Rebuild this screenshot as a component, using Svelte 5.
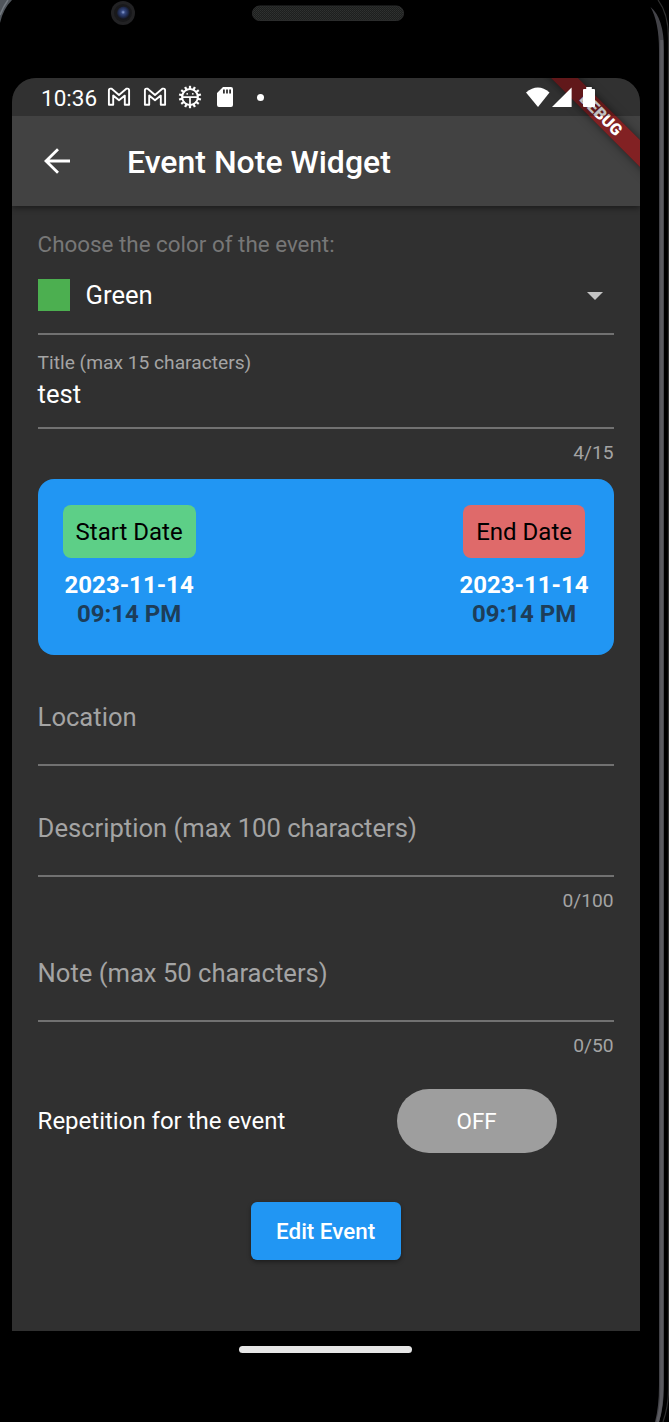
<script>
  const dates = [
    { kind: 'start', label: 'Start Date', day: '2023-11-14', time: '09:14 PM' },
    { kind: 'end', label: 'End Date', day: '2023-11-14', time: '09:14 PM' }
  ];
  const teeth = Array.from({ length: 14 }, (_, i) => (i * 360) / 14);
</script>

{#snippet mail()}
  <svg class="mail" width="24" height="20" viewBox="0 0 24 20">
    <path d="M1.9 17.8V3.2Q1.9 1.6 3.4 1.6H4.4L12 7.9 19.6 1.6H20.6Q22.1 1.6 22.1 3.2V17.8H17.8V8.6L12 13.3 6.2 8.6V17.8Z" fill="none" stroke="#fff" stroke-width="1.9" stroke-linejoin="round" />
  </svg>
{/snippet}

<div class="device">
  <svg class="frame" width="669" height="1422" viewBox="0 0 669 1422">
    <defs>
      <radialGradient id="lens" cx="45%" cy="42%">
        <stop offset="0" stop-color="#8fa3d8" />
        <stop offset=".3" stop-color="#34477f" />
        <stop offset=".75" stop-color="#1d2748" />
        <stop offset="1" stop-color="#15161c" />
      </radialGradient>
      <pattern id="mesh" width="2" height="2" patternUnits="userSpaceOnUse">
        <rect width="2" height="2" fill="#1d1f1e" />
        <rect width="1" height="1" fill="#303231" />
        <rect x="1" y="1" width="1" height="1" fill="#2b2d2c" />
      </pattern>
    </defs>
    <path d="M0 0H12Q3 9 0 23Z" fill="#50555b" />
    <path d="M8 0Q3 7 0 15" fill="none" stroke="#747a80" stroke-width="1.5" />
    <path d="M650.5 7Q664 18 664 50V1385Q664 1407 659 1422H655Q659 1407 659 1385V50Q659 22 650.5 7Z" fill="#434348" />
    <path d="M661.7 40V1390Q661.5 1408 657.5 1422" fill="none" stroke="#5b5b60" stroke-width="3" />
    <path d="M658 0Q668.5 14 668.5 38V1390Q668.5 1406 663 1422" fill="none" stroke="#303030" stroke-width="1.2" />
    <circle cx="123" cy="13" r="12" fill="#222224" />
    <circle cx="123" cy="13" r="9" fill="#19191b" />
    <circle cx="123.8" cy="13.3" r="6.8" fill="url(#lens)" />
    <rect x="252.5" y="6" width="151" height="14.5" rx="7" fill="url(#mesh)" stroke="#2b2c2c" />
  </svg>

  <main class="screen">
    <div class="status">
      <span class="clock">10:36</span>
      {@render mail()}
      {@render mail()}
      <svg class="gear" width="24" height="24" viewBox="0 0 24 24">
        {#each teeth as angle}
          <rect x="10.9" y="0.8" width="2.2" height="4" fill="#fff" transform="rotate({angle} 12 12)" />
        {/each}
        <circle cx="12" cy="12" r="7.9" fill="none" stroke="#fff" stroke-width="2" />
        <path d="M4 12.2H20M12 12V20" stroke="#fff" stroke-width="1.7" />
        <circle cx="9.2" cy="8.8" r=".9" fill="#fff" />
        <circle cx="14.8" cy="8.8" r=".9" fill="#fff" />
      </svg>
      <svg class="card-icon" width="16" height="20" viewBox="0 0 16 20">
        <path fill="#fff" fill-rule="evenodd" d="M6 0H14Q16 0 16 2V18Q16 20 14 20H2Q0 20 0 18V6ZM6 2.5V6.5H7.8V2.5ZM9.1 2.5V6.5H10.9V2.5ZM12.2 2.5V6.5H14V2.5Z" />
      </svg>
      <i class="more"></i>
      <svg class="signals" width="72" height="20" viewBox="0 0 72 20">
        <path fill="#fff" d="M0 5.5Q12 -4.3 23.5 5.5L12 20Z" />
        <path fill="#fff" d="M26 20L45.6 .4V20Z" />
        <path fill="#fff" d="M60.2 0H65.8V2H68Q69 2 69 3V19Q69 20 68 20H58Q57 20 57 19V3Q57 2 58 2H60.2Z" />
      </svg>
    </div>
    <header>
      <svg width="26" height="26" viewBox="0 0 26 26">
        <path d="M26 13H2M14 1.2L2 13L14 24.8" fill="none" stroke="#fff" stroke-width="2.8" />
      </svg>
      <h1>Event Note Widget</h1>
    </header>

    <div class="form">
      <div class="hint">Choose the color of the event:</div>
      <div class="select">
        <i class="swatch"></i>
        <span>Green</span>
        <svg width="16" height="8" viewBox="0 0 16 8"><path d="M0 0H16L8 8Z" fill="#c3c3c3" /></svg>
      </div>
      <div class="field title">
        <small>Title (max 15 characters)</small>
        <span>test</span>
      </div>
      <div class="counter">4/15</div>

      <section class="dates">
        {#each dates as d}
          <div class="date">
            <button class={d.kind}>{d.label}</button>
            <strong>{d.day}</strong>
            <b>{d.time}</b>
          </div>
        {/each}
      </section>

      <div class="field location">Location</div>
      <div class="field description">Description (max 100 characters)</div>
      <div class="counter">0/100</div>
      <div class="field note">Note (max 50 characters)</div>
      <div class="counter">0/50</div>

      <div class="repeat">
        <span>Repetition for the event</span>
        <button class="toggle">OFF</button>
      </div>
      <button class="submit">Edit Event</button>
    </div>

    <div class="ribbon"><span>DEBUG</span></div>
  </main>
  <div class="home"></div>
</div>

<style>
  :global(body) { margin: 0; background: #000; }
  * { box-sizing: border-box; }
  .device {
    position: relative;
    width: 669px;
    height: 1422px;
    padding: 78px 29px 0 12px;
    overflow: hidden;
    background: #000;
    font-family: Roboto, sans-serif;
    color: #fff;
  }
  .frame { position: absolute; left: 0; top: 0; }
  .screen {
    position: relative;
    width: 628px;
    height: 1252.5px;
    overflow: hidden;
    border-radius: 24px 24px 0 0;
    background: linear-gradient(#424242 60px, #303030 60px);
  }
  /* Translucent system bar: tints the app bar and the ribbon below it. */
  .status {
    position: relative;
    z-index: 2;
    display: flex;
    align-items: center;
    height: 38px;
    padding-left: 29px;
    background: rgba(0, 0, 0, .25);
  }
  .clock { width: 66px; font-size: 22.5px; line-height: 38px; padding-top: 1px; }
  .mail { margin-right: 11.5px; }
  .gear { margin: 0 15px 0 0; }
  .card-icon { margin-right: 24px; }
  .more { width: 7px; height: 7px; border-radius: 50%; background: #fff; }
  .signals { margin-left: 262px; }
  header {
    position: relative;
    display: flex;
    align-items: center;
    gap: 57px;
    height: 90px;
    padding-left: 32px;
    background: #424242;
    box-shadow: 0 2px 6px rgba(0, 0, 0, .45);
    clip-path: inset(0 0 -12px 0);
  }
  h1 { margin: 1px 0 0; font-size: 32px; line-height: 40px; font-weight: 500; white-space: nowrap; }
  .form { display: flex; flex-direction: column; padding: 23.5px 26.4px 0 25.6px; }
  .hint { height: 30px; font-size: 22.4px; line-height: 29px; color: #777; }
  .select {
    display: flex;
    align-items: center;
    height: 75px;
    padding: 0 11px 3px 0;
    border-bottom: 2px solid #717171;
    font-size: 25.6px;
  }
  .select svg { margin: 2px 0 0 auto; }
  .swatch { width: 32px; height: 32px; margin-right: 16px; background: #4caf50; }
  .field { border-bottom: 2px solid #717171; font-size: 25.6px; line-height: 32px; color: #a4a4a4; white-space: nowrap; }
  .title { display: flex; flex-direction: column; height: 94px; padding-top: 16px; }
  .title small { font-size: 19.2px; line-height: 24px; }
  .title span { margin-top: 3px; color: #fff; }
  .counter { height: 50px; padding-top: 10px; font-size: 19.2px; line-height: 27px; text-align: right; color: #a4a4a4; }
  .dates {
    display: flex;
    justify-content: space-between;
    height: 176px;
    margin-top: .9px;
    padding: 26.1px 25px;
    border-radius: 16px;
    background: #2196f3;
  }
  .date { display: flex; flex-direction: column; align-items: center; font-size: 24px; line-height: 29px; }
  .date strong { margin-top: 13px; font-weight: 700; }
  .date b { font-weight: 700; color: #1d3d59; }
  button { border: 0; padding: 0; font: inherit; color: inherit; }
  .date button { height: 54.4px; padding: 1px 13px 0; border-radius: 8px; color: #000; white-space: nowrap; }
  .start { background: #5dcf87; }
  .end { background: #df6a6a; }
  .location { height: 111.1px; padding-top: 45.6px; }
  .description { height: 110.2px; padding-top: 45.4px; }
  .note { height: 95.5px; padding-top: 30.5px; }
  .repeat { display: flex; align-items: center; justify-content: space-between; height: 64px; margin-top: 16.4px; padding-right: 57px; font-size: 24px; }
  .toggle { width: 160px; height: 64px; border-radius: 32px; background: #9e9e9e; font-size: 22.4px; }
  .submit {
    align-self: center;
    width: 150px;
    height: 58px;
    margin-top: 49px;
    border-radius: 6.4px;
    background: #2196f3;
    box-shadow: 0 2px 4px rgba(0, 0, 0, .4);
    font-size: 22.4px;
    font-weight: 500;
  }
  .ribbon {
    position: absolute;
    left: 488.2px;
    top: 26.2px;
    width: 200px;
    height: 19px;
    padding-left: 3px;
    transform: rotate(45deg);
    background: rgba(165, 15, 18, .65);
    box-shadow: 0 0 10px rgba(0, 0, 0, .5);
    font-size: 16.3px;
    font-weight: 900;
    line-height: 19px;
    text-align: center;
  }
  .home { position: relative; left: -.7px; width: 173px; height: 7px; margin: 15.5px auto 0; border-radius: 4px; background: #e6e6e6; }
</style>
